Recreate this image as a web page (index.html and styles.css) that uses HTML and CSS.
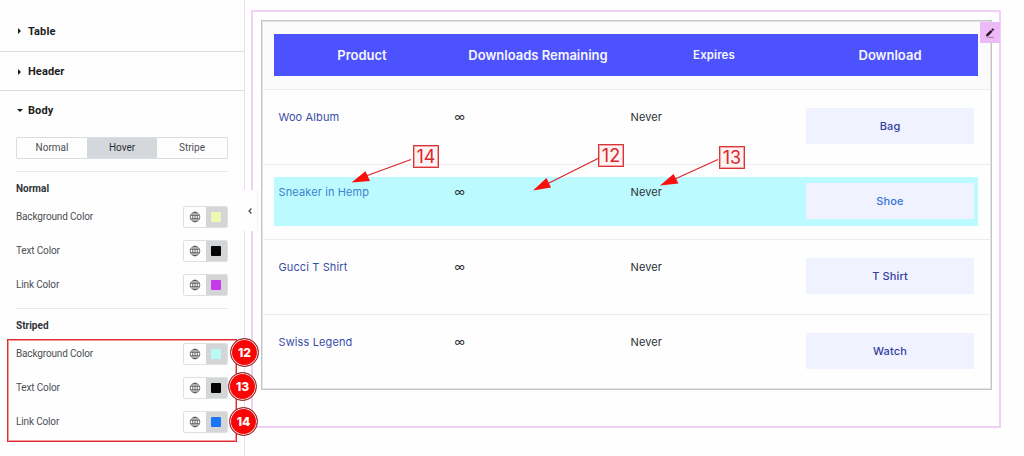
FILE: index.html
```
<!DOCTYPE html>
<html lang="en">
<head>
  <meta charset="UTF-8">
  <meta name="viewport" content="width=device-width, initial-scale=1">
  <title>Downloads Table - Style Editor</title>
  <link rel="stylesheet" href="styles.css">
</head>
<body>
  <svg width="0" height="0" class="sprite">
    <symbol id="globe" viewBox="0 0 12 12">
      <g fill="none" stroke="#4a4d50" stroke-width="0.8">
        <circle cx="6" cy="6" r="4.8"/>
        <ellipse cx="6" cy="6" rx="2.3" ry="4.8"/>
        <path d="M6 1.2v9.6M1.6 4.3h8.8M1.6 7.7h8.8"/>
      </g>
    </symbol>
  </svg>

  <div class="editor">
    <aside class="panel">
      <div class="section section-table"><span class="arrow"></span>Table</div>
      <div class="section section-header"><span class="arrow"></span>Header</div>
      <div class="section section-body"><span class="arrow open"></span>Body</div>

      <div class="tabs">
        <div class="tab">Normal</div>
        <div class="tab active">Hover</div>
        <div class="tab">Stripe</div>
      </div>

      <div class="group">
        <h4>Normal</h4>
        <div class="control">
          <span>Background Color</span>
          <div class="picker"><div class="global"><svg><use href="#globe"/></svg></div><div class="swatch"><i class="yellow"></i></div></div>
        </div>
        <div class="control">
          <span>Text Color</span>
          <div class="picker"><div class="global"><svg><use href="#globe"/></svg></div><div class="swatch"><i class="black"></i></div></div>
        </div>
        <div class="control">
          <span>Link Color</span>
          <div class="picker"><div class="global"><svg><use href="#globe"/></svg></div><div class="swatch"><i class="purple"></i></div></div>
        </div>
      </div>

      <div class="group">
        <h4>Striped</h4>
        <div class="control">
          <span>Background Color</span>
          <div class="picker"><div class="global"><svg><use href="#globe"/></svg></div><div class="swatch"><i class="cyan"></i></div></div>
        </div>
        <div class="control">
          <span>Text Color</span>
          <div class="picker"><div class="global"><svg><use href="#globe"/></svg></div><div class="swatch"><i class="black"></i></div></div>
        </div>
        <div class="control">
          <span>Link Color</span>
          <div class="picker"><div class="global"><svg><use href="#globe"/></svg></div><div class="swatch"><i class="blue"></i></div></div>
        </div>
      </div>
    </aside>

    <main class="preview">
      <div class="widget">
        <div class="downloads">
          <div class="row head">
            <div class="cells">
              <div>Product</div>
              <div>Downloads Remaining</div>
              <div class="small">Expires</div>
              <div>Download</div>
            </div>
          </div>
          <div class="row">
            <div class="cells">
              <div class="link">Woo Album</div><div class="infinity">∞</div><div>Never</div>
              <div class="button">Bag</div>
            </div>
          </div>
          <div class="row hovered">
            <div class="cells">
              <div class="link">Sneaker in Hemp</div><div class="infinity">∞</div><div>Never</div>
              <div class="button">Shoe</div>
            </div>
          </div>
          <div class="row">
            <div class="cells">
              <div class="link">Gucci T Shirt</div><div class="infinity">∞</div><div>Never</div>
              <div class="button">T Shirt</div>
            </div>
          </div>
          <div class="row">
            <div class="cells">
              <div class="link">Swiss Legend</div><div class="infinity">∞</div><div>Never</div>
              <div class="button">Watch</div>
            </div>
          </div>
        </div>
        <div class="edit">
          <svg width="12" height="12" viewBox="0 0 12 12">
            <path d="M2 9.4l.5-2.2 4.4-4.3 1.7 1.7-4.4 4.3z" fill="#261526"/>
            <path d="M7.4 2.4l.8-.8q.4-.4.8 0l.9.9q.4.4 0 .8l-.8.8z" fill="#261526"/>
            <path d="M3.4 10.3h6.4" stroke="#8c648c" stroke-width="0.8"/>
          </svg>
        </div>
      </div>
    </main>
  </div>

  <div class="collapse">
    <svg width="6" height="8" viewBox="0 0 6 8"><path d="M4.4 1.5L2 4l2.4 2.5" fill="none" stroke="#444" stroke-width="1.2"/></svg>
  </div>

  <!-- Annotations -->
  <div class="outline"></div>
  <div class="badge badge-12">12</div>
  <div class="badge badge-13">13</div>
  <div class="badge badge-14">14</div>

  <svg class="pointers" width="1024" height="456" viewBox="0 0 1024 456">
    <g stroke="#d8282c" stroke-width="1.3">
      <path d="M411 159.500L366 176"/>
      <path d="M598 158.500L547 184"/>
      <path d="M718 159.500L675 179"/>
    </g>
    <g fill="#fa0f0c">
      <path d="M351.500 182.500L365.500 171.300L370 181z"/>
      <path d="M533 190.500L546.500 178L551 187.500z"/>
      <path d="M660 185.500L673.500 174L678.500 183.500z"/>
    </g>
  </svg>
  <div class="label label-14">14</div>
  <div class="label label-12">12</div>
  <div class="label label-13">13</div>
</body>
</html>
```
FILE: styles.css
```
* {
  box-sizing: border-box;
}

body {
  margin: 0;
  position: relative;
  width: 1024px;
  height: 456px;
  overflow: hidden;
  background-color: #fefefe;
  font-family: Roboto, sans-serif;
  color: #4b4f54;
}

.sprite {
  position: absolute;
}

.editor {
  display: flex;
  height: 456px;
}

/* Settings panel */
.panel {
  width: 245px;
  border-right: 1px solid #f2d5f5;
}

.section {
  display: flex;
  align-items: center;
  padding-left: 18px;
  font-size: 11px;
  font-weight: 700;
  letter-spacing: 0.1px;
  color: #1b1d20;
}

.section-table {
  height: 52px;
  padding-top: 11px;
  border-bottom: 1px solid #dcdde0;
}

.section-header {
  height: 39px;
  padding-top: 1px;
  border-bottom: 1px solid #dcdde0;
}

.section-body {
  height: 40px;
  padding-bottom: 1px;
}

.arrow {
  width: 10px;
}

.arrow::before {
  content: "";
  display: block;
  width: 0;
  border-left: 3px solid #1b1d20;
  border-top: 3px solid transparent;
  border-bottom: 3px solid transparent;
}

.arrow.open::before {
  margin-left: -1px;
  border-top: 3px solid #1b1d20;
  border-left: 3px solid transparent;
  border-right: 3px solid transparent;
  border-bottom: 0;
}

.tabs {
  display: flex;
  width: 212px;
  height: 22px;
  margin: 6px 0 0 16px;
  border: 1px solid #dadcdf;
  border-radius: 2px;
  overflow: hidden;
}

.tab {
  flex: 1;
  font-size: 10px;
  line-height: 20px;
  text-align: center;
}

.tab.active {
  background-color: #d4d7db;
  color: #2c2f33;
}

.group {
  width: 212px;
  height: 137px;
  margin-left: 16px;
  border-top: 1px solid #e8e9eb;
}

.tabs + .group {
  margin-top: 12px;
}

.group h4 {
  margin: 10px 0 9.5px;
  font-size: 10px;
  line-height: 14px;
  color: #303338;
}

.control {
  display: flex;
  justify-content: space-between;
  align-items: center;
  height: 22px;
  margin-bottom: 12.3px;
  font-size: 10px;
  letter-spacing: -0.15px;
}

.control span {
  padding-bottom: 1px;
}

.picker {
  display: flex;
  width: 45px;
  height: 22px;
  border: 1px solid #dfe0e2;
  border-radius: 2px;
  overflow: hidden;
}

.global,
.swatch {
  flex: 1;
  display: flex;
  align-items: center;
  justify-content: center;
}

.global svg {
  width: 12px;
  height: 12px;
}

.swatch {
  background-color: #d4d5d7;
}

.swatch i {
  width: 10px;
  height: 10px;
  border-radius: 1px;
}

.yellow { background-color: #edf8b0; }
.black { background-color: #050505; }
.purple { background-color: #c43aec; }
.cyan { background-color: #b9faf5; }
.blue { background-color: #1c75f8; }

/* Table preview */
.preview {
  padding: 10px 0 0 6px;
  font-family: Inter, sans-serif;
}

.widget {
  position: relative;
  width: 750px;
  height: 418px;
  padding: 8px;
  border: 2px solid #f0d0f5;
}

.downloads {
  width: 731px;
  height: 370px;
  border: 1px solid #c3c5c7;
  box-shadow: inset 0 0 0 1px #e4e5e6;
}

.row {
  height: 75px;
  padding: 12px 13px 13px 12px;
  border-bottom: 1px solid #ebecee;
}

.row:last-child {
  border-bottom: 0;
}

.cells {
  display: grid;
  grid-template-columns: repeat(4, 1fr);
  height: 49px;
  font-size: 11px;
  letter-spacing: 0.12px;
  color: #2c3034;
}

.cells > div {
  padding-left: 4.5px;
  line-height: 31px;
}

.row.head {
  height: 69px;
  padding-top: 13px;
  background-color: rgba(0, 0, 0, 0.012);
}

.head .cells {
  height: 42px;
  background-color: #4d52ff;
}

.head .cells > div {
  padding: 0;
  font-size: 13px;
  font-weight: 600;
  letter-spacing: 0;
  line-height: 43px;
  text-align: center;
  color: #f6f6ff;
}

.head .cells > .small {
  font-size: 11.5px;
  letter-spacing: 0.1px;
}

.cells .link {
  color: #3a4da8;
}

.cells > .button {
  height: 36px;
  margin: 6px 4px 0;
  padding: 0;
  background-color: #f0f2ff;
  font-weight: 500;
  line-height: 37px;
  text-align: center;
  color: #3440a0;
}

.hovered .cells {
  background-color: #bbfbff;
}

.hovered .cells .link {
  color: #3b82cf;
}

.hovered .cells > .button {
  color: #3574d8;
}

.edit {
  position: absolute;
  top: 10px;
  right: -1px;
  display: flex;
  align-items: center;
  justify-content: center;
  width: 20px;
  height: 21px;
  background-color: #edb9f8;
}

.collapse {
  position: absolute;
  left: 243px;
  top: 190px;
  display: flex;
  align-items: center;
  justify-content: center;
  width: 14px;
  height: 41px;
  background-color: #fefefe;
  border-radius: 0 2px 2px 0;
  box-shadow: 1px 0 1px #f0f0f2;
}

/* Annotations */
.outline {
  position: absolute;
  left: 7px;
  top: 339px;
  width: 230px;
  height: 103px;
  border: 1px solid #e02c2e;
  box-shadow: inset 0 0 0 1px #f29a9b;
}

.badge {
  position: absolute;
  width: 29px;
  height: 29px;
  border: 1px solid #7d3434;
  border-radius: 50%;
  background-color: #fa0505;
  box-shadow: inset 0 0 0 1px #ffd9d9;
  font-family: Inter, sans-serif;
  font-size: 12px;
  font-weight: 800;
  line-height: 28px;
  text-align: center;
  color: #fff;
}

.badge-12 { left: 230px; top: 338px; }
.badge-13 { left: 228px; top: 372px; }
.badge-14 { left: 229px; top: 407px; }

.pointers {
  position: absolute;
  left: 0;
  top: 0;
}

.label {
  position: absolute;
  width: 26px;
  height: 23px;
  border: 1px solid #d93437;
  box-shadow: inset 0 0 0 1px #f0a5a6;
  background-color: #fff2f2;
  font-family: Inter, sans-serif;
  font-size: 18px;
  line-height: 22px;
  text-align: center;
  color: #d8282c;
}

.label-14 { left: 413px; top: 145px; }
.label-12 { left: 598px; top: 144px; }
.label-13 { left: 719px; top: 146px; }
```
